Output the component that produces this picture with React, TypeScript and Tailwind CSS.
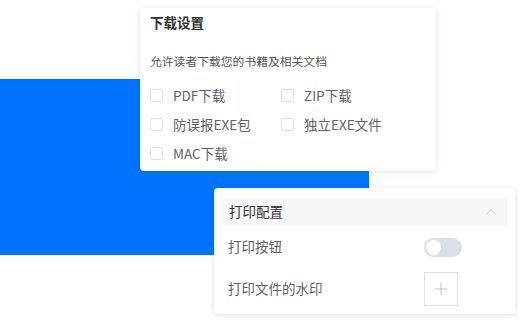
import { ChevronUp, Plus } from "lucide-react";

const FONT = "font-['Noto_Sans_CJK_SC','Noto_Sans',sans-serif]";

const downloadOptions = [
  "PDF下载",
  "ZIP下载",
  "防误报EXE包",
  "独立EXE文件",
  "MAC下载",
];

function Checkbox({ label }: { label: string }) {
  return (
    <label className="flex h-[29px] items-center">
      <span className="h-[13px] w-[13px] rounded-[2px] border border-[#dcdfe6] bg-white" />
      <span className="ml-[10px] text-[13.5px] leading-none text-[#606266]">{label}</span>
    </label>
  );
}

function DownloadCard() {
  return (
    <div className="absolute left-[140px] top-[8px] h-[163px] w-[296px] rounded-[4px] bg-white px-[10px] pt-[6px] shadow-[0_1px_6px_rgba(0,0,0,0.12)]">
      <h3 className="h-[16px] text-[13.5px] font-bold leading-[16px] text-[#303133]">下载设置</h3>
      <p className="mt-[23px] text-[11.8px] leading-[16px] text-[#555]">允许读者下载您的书籍及相关文档</p>
      <div className="mt-[12px] grid grid-cols-[131px_1fr]">
        {downloadOptions.map((o) => (
          <Checkbox key={o} label={o} />
        ))}
      </div>
    </div>
  );
}

function PrintCard() {
  return (
    <div className="absolute left-[214px] top-[188px] h-[126px] w-[301px] rounded-[4px] bg-white px-[8px] pt-[10px] shadow-[0_1px_6px_rgba(0,0,0,0.12)]">
      <div className="flex h-[28px] items-center justify-between bg-[#f7f7f8] pl-[7px] pr-[7px]">
        <span className="text-[13.5px] leading-none text-[#303133]">打印配置</span>
        <ChevronUp size={18} strokeWidth={1.3} className="text-[#d0d1d4]" />
      </div>
      <div className="mt-[10px] flex h-[22px] items-center pl-[6px]">
        <span className="w-[196px] text-[13.5px] leading-none text-[#606266]">打印按钮</span>
        <span className="flex h-[19px] w-[38px] items-center rounded-full bg-[#dcdfe6] px-[2px]">
          <span className="h-[15px] w-[15px] rounded-full bg-white" />
        </span>
      </div>
      <div className="mt-[14px] flex h-[34px] items-center pl-[6px]">
        <span className="w-[196px] text-[13.5px] leading-none text-[#606266]">打印文件的水印</span>
        <span className="flex h-[34px] w-[34px] items-center justify-center border border-[#dcdfe6]">
          <Plus size={20} strokeWidth={1} className="text-[#b8b8b8]" />
        </span>
      </div>
    </div>
  );
}

export default function App() {
  return (
    <div className={`relative h-[324px] w-[526px] overflow-hidden bg-white ${FONT}`}>
      <div className="mt-[79px] h-[176px] w-[369px] bg-[#0074ff]" />
      <DownloadCard />
      <PrintCard />
    </div>
  );
}
